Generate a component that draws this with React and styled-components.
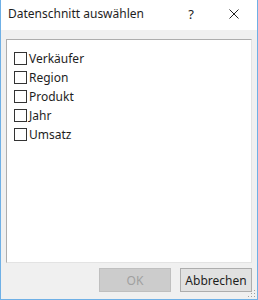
import React from 'react';
import styled, { createGlobalStyle } from 'styled-components';

const GlobalStyle = createGlobalStyle`
  html, body {
    margin: 0;
    padding: 0;
    background: #ffffff;
  }
  * { box-sizing: border-box; }
`;

const Window = styled.div`
  width: 258px;
  height: 300px;
  display: flex;
  flex-direction: column;
  background: #f0f0f0;
  border-left: 1px solid #6fb0e6;
  border-right: 1px solid #6fb0e6;
  border-bottom: 1px solid #6fb0e6;
  font-family: "Segoe UI", "Noto Sans", sans-serif;
  font-size: 12px;
  color: #1e1e1e;
  position: relative;
`;

const TitleBar = styled.div`
  height: 30px;
  flex: none;
  display: flex;
  align-items: center;
  background: #ffffff;
  padding-left: 7px;
`;

const Title = styled.div`
  flex: 1;
  font-size: 12px;
  color: #1e1e1e;
  padding-bottom: 3px;
`;

const TitleButton = styled.div`
  width: ${({ wide }) => (wide ? 46 : 40)}px;
  height: 30px;
  display: flex;
  align-items: center;
  justify-content: center;
  font-size: 13px;
  color: #222;
  padding-bottom: 3px;
`;

const Body = styled.div`
  flex: 1;
  display: flex;
  flex-direction: column;
  padding: 9px 5px 7px 5px;
`;

const ListPanel = styled.div`
  height: 224px;
  background: #ffffff;
  border: 1px solid #adadad;
  border-right-color: #e3e3e3;
  border-bottom-color: #e3e3e3;
  padding: 9px 0 0 7px;
  display: flex;
  flex-direction: column;
`;

const Row = styled.label`
  display: flex;
  align-items: center;
  height: 19px;
  gap: 2px;
`;

const Box = styled.span`
  width: 13px;
  height: 13px;
  border: 1px solid #333333;
  background: #ffffff;
  flex: none;
`;

const ItemText = styled.span`
  font-size: 12px;
  color: #1e1e1e;
`;

const Footer = styled.div`
  display: flex;
  justify-content: flex-end;
  gap: 9px;
  padding-top: 5px;
  padding-right: 0;
`;

const Button = styled.div`
  width: 72px;
  height: 24px;
  display: flex;
  align-items: center;
  justify-content: center;
  font-size: 12px;
  background: ${({ disabled }) => (disabled ? '#cccccc' : '#e1e1e1')};
  border: 1px solid ${({ disabled }) => (disabled ? '#bfbfbf' : '#adadad')};
  color: ${({ disabled }) => (disabled ? '#a0a0a0' : '#1e1e1e')};
`;

const Grip = styled.svg`
  position: absolute;
  right: 1px;
  bottom: 1px;
`;

const items = ['Verkäufer', 'Region', 'Produkt', 'Jahr', 'Umsatz'];

export default function App() {
  return (
    <>
      <GlobalStyle />
      <Window>
        <TitleBar>
          <Title>Datenschnitt auswählen</Title>
          <TitleButton>?</TitleButton>
          <TitleButton wide>
            <svg width="10" height="10" viewBox="0 0 10 10">
              <path d="M0.5 0.5L9.5 9.5M9.5 0.5L0.5 9.5" stroke="#222" strokeWidth="1" />
            </svg>
          </TitleButton>
        </TitleBar>
        <Body>
          <ListPanel>
            {items.map(item => (
              <Row key={item}>
                <Box />
                <ItemText>{item}</ItemText>
              </Row>
            ))}
          </ListPanel>
          <Footer>
            <Button disabled>OK</Button>
            <Button>Abbrechen</Button>
          </Footer>
        </Body>
        <Grip width="8" height="8" viewBox="0 0 8 8">
          <rect x="6" y="0" width="1" height="1" fill="#a0a0a0" />
          <rect x="3" y="3" width="1" height="1" fill="#a0a0a0" />
          <rect x="6" y="3" width="1" height="1" fill="#a0a0a0" />
          <rect x="0" y="6" width="1" height="1" fill="#a0a0a0" />
          <rect x="3" y="6" width="1" height="1" fill="#a0a0a0" />
          <rect x="6" y="6" width="1" height="1" fill="#a0a0a0" />
        </Grip>
      </Window>
    </>
  );
}
